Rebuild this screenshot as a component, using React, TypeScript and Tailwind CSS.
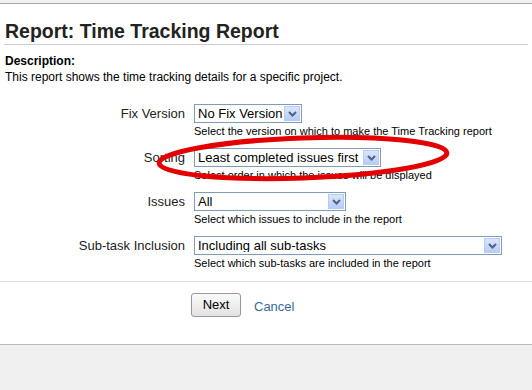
import React from 'react';

interface FieldRow {
  label: string;
  value: string;
  width: string;
  help: string;
  mt: string;
}

const rows: FieldRow[] = [
  {
    label: 'Fix Version',
    value: 'No Fix Version',
    width: 'w-[108px]',
    help: 'Select the version on which to make the Time Tracking report',
    mt: 'mt-0',
  },
  {
    label: 'Sorting',
    value: 'Least completed issues first',
    width: 'w-[187px]',
    help: 'Select order in which the issues will be displayed',
    mt: 'mt-[10px]',
  },
  {
    label: 'Issues',
    value: 'All',
    width: 'w-[152px]',
    help: 'Select which issues to include in the report',
    mt: 'mt-[10px]',
  },
  {
    label: 'Sub-task Inclusion',
    value: 'Including all sub-tasks',
    width: 'w-[308px]',
    help: 'Select which sub-tasks are included in the report',
    mt: 'mt-[10px]',
  },
];

function SelectBox({ value, width }: { value: string; width: string }) {
  return (
    <div className={`${width} h-[19px] flex items-center border border-[#7f9db9] bg-white`}>
      <span className="flex-1 pl-[3px] text-[13px] leading-none text-black whitespace-nowrap overflow-hidden">
        {value}
      </span>
      <span className="w-[16px] h-[15px] mr-[1px] flex items-center justify-center border border-[#b8cbf0] bg-gradient-to-b from-[#dbe6fb] to-[#b7ccf5]">
        <svg width="9" height="6" viewBox="0 0 9 6">
          <path d="M1 1 L4.5 4.5 L8 1" fill="none" stroke="#4d6185" strokeWidth="2" />
        </svg>
      </span>
    </div>
  );
}

export default function App() {
  return (
    <div className="relative w-[532px] h-[390px] bg-white font-['Liberation_Sans',Arial,sans-serif] text-[#333] overflow-hidden">
      <div className="h-[4px] bg-[#f0f0f0] border-b border-[#aaa]" />

      {/* Title */}
      <div className="mx-[4px] mt-[16px] pb-[2px] border-b border-[#ccc]">
        <h1 className="pl-[1px] text-[19.5px] leading-[22px] font-bold text-[#222]">Report: Time Tracking Report</h1>
      </div>

      {/* Description */}
      <div className="px-[5px] mt-[8px] text-[12px] leading-[16px] text-black">
        <p className="font-bold">Description:</p>
        <p>This report shows the time tracking details for a specific project.</p>
      </div>

      {/* Fields */}
      <div className="mt-[19px]">
        {rows.map((row) => (
          <div key={row.label} className={`flex ${row.mt}`}>
            <div className="w-[186px] pr-[1px] text-right text-[13px] leading-[19px] text-[#222]">{row.label}</div>
            <div className="ml-[8px]">
              <SelectBox value={row.value} width={row.width} />
              <p className="mt-[1px] text-[11px] leading-[14px] text-black">{row.help}</p>
            </div>
          </div>
        ))}
      </div>

      {/* Buttons */}
      <div className="mt-[11px] border-t border-[#ddd] h-[63px] flex items-start pt-[11px] pl-[191px]">
        <button className="w-[50px] h-[24px] rounded-[3px] border border-[#999] bg-gradient-to-b from-[#fafafa] to-[#e2e2e2] text-[13px] text-black">
          Next
        </button>
        <a className="ml-[13px] mt-[4px] text-[13px] text-[#3b6a95]">Cancel</a>
      </div>

      <div className="border-t border-[#bbb] h-[46px] bg-[#f0f0f0]" />

      {/* Red annotation ellipse */}
      <svg className="absolute left-0 top-0 pointer-events-none" width="532" height="390">
        <ellipse cx="303" cy="158" rx="144" ry="20" transform="rotate(-2 303 158)" fill="none" stroke="#e30000" strokeWidth="5" />
      </svg>
    </div>
  );
}
